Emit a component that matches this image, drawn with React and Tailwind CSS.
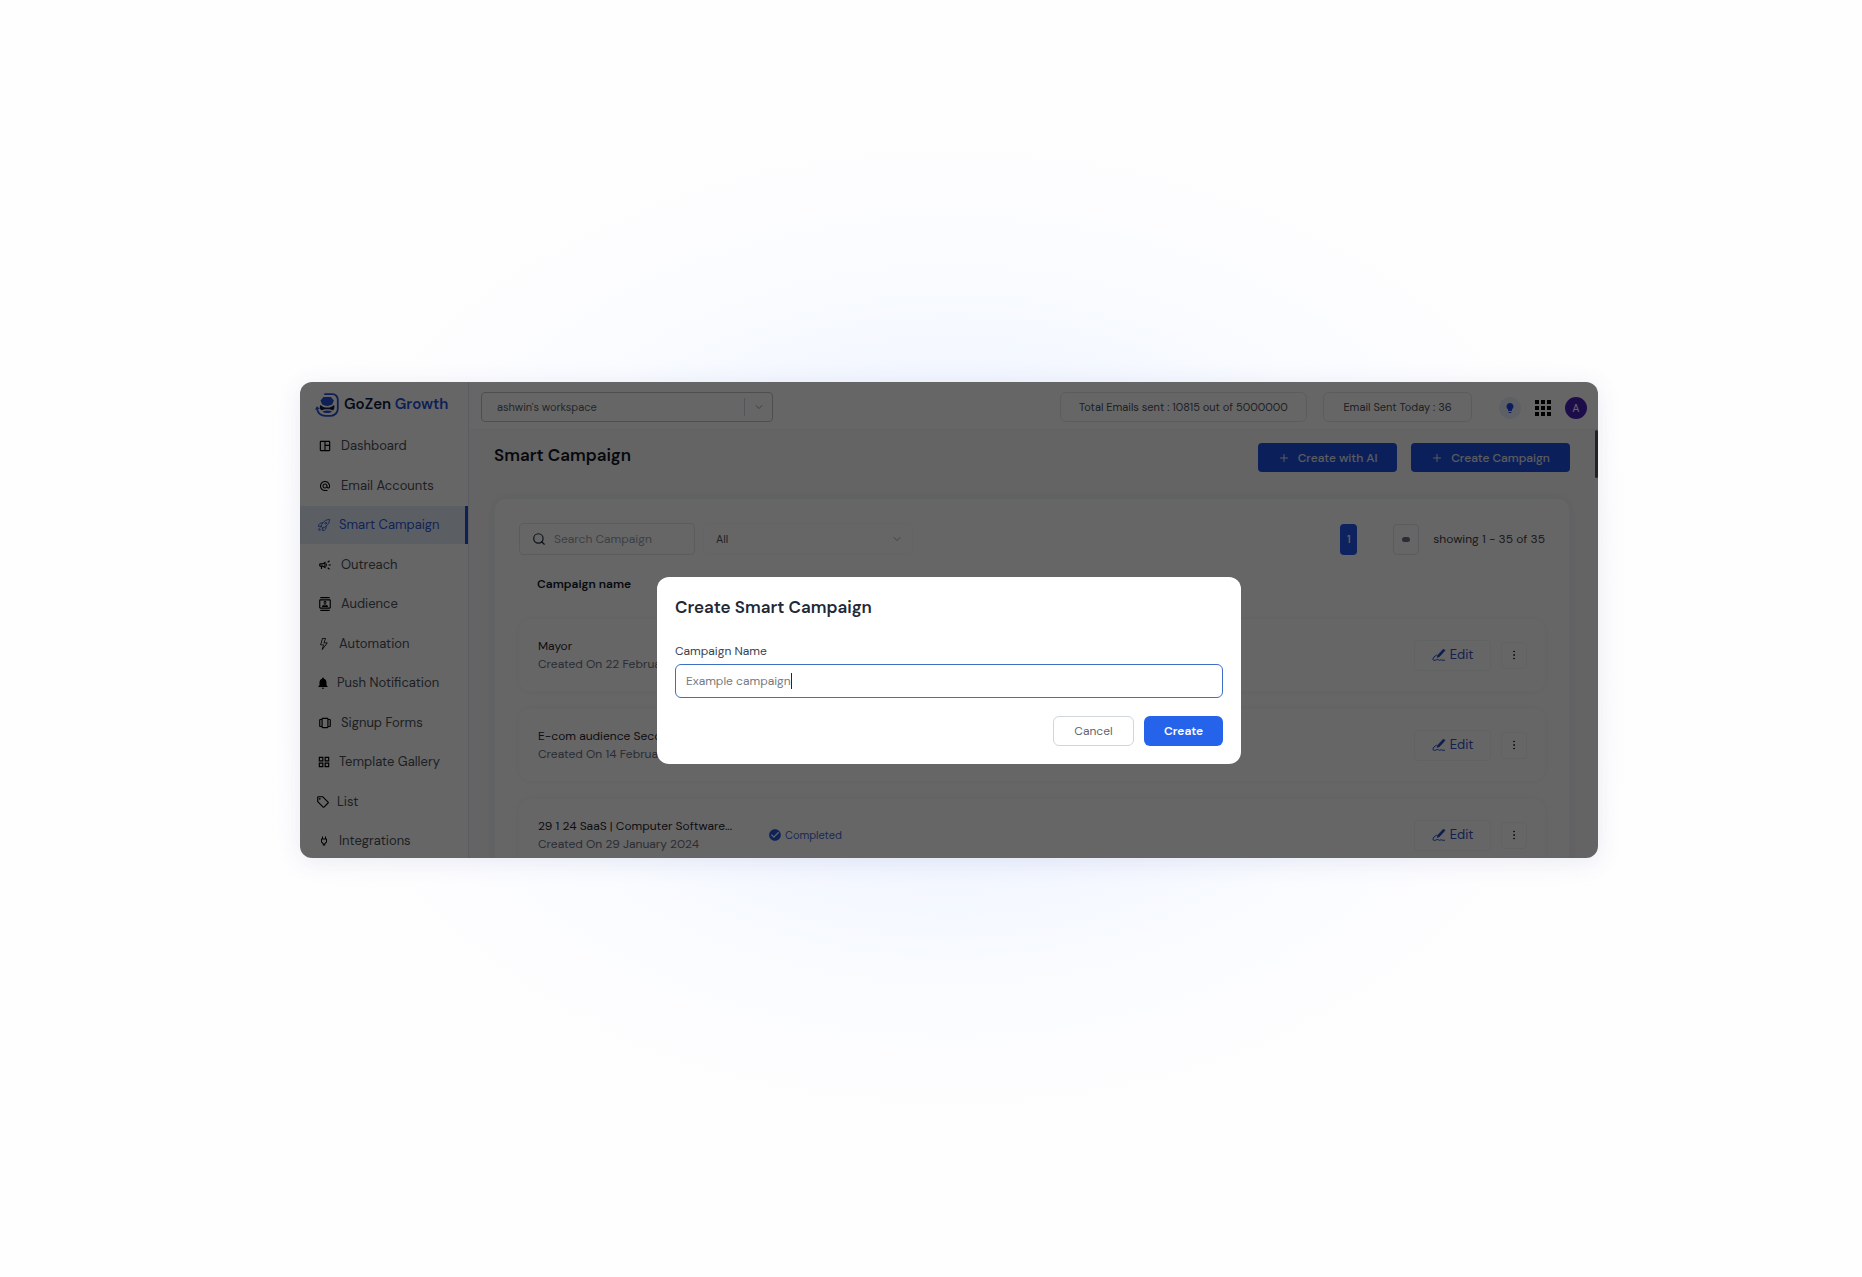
import React, { useState } from 'react';
import {
    MdOutlineSpaceDashboard,
    MdAlternateEmail,
    MdOutlineCampaign,
    MdOutlineContacts,
    MdNotifications,
    MdOutlineGridView,
    MdOutlinePower,
    MdOutlineLocalOffer,
    MdApps,
    MdCheckCircle,
    MdLightbulb
} from 'react-icons/md';
import { BiCarousel } from 'react-icons/bi';
import { BsLightning } from 'react-icons/bs';
import { HiOutlineRocketLaunch } from 'react-icons/hi2';
import { ChevronDown, Plus, Search, EllipsisVertical } from 'lucide-react';

const menu = [
    { label: 'Dashboard', icon: MdOutlineSpaceDashboard, box: 'w-4', size: 'h-3.5 w-3.5' },
    { label: 'Email Accounts', icon: MdAlternateEmail, box: 'w-4', size: 'h-3 w-3' },
    { label: 'Smart Campaign', icon: HiOutlineRocketLaunch, box: 'w-3.5', size: 'h-3.5 w-3.5', active: true },
    { label: 'Outreach', icon: MdOutlineCampaign, box: 'w-4', size: 'h-3.5 w-3.5' },
    { label: 'Audience', icon: MdOutlineContacts, box: 'w-4', size: 'h-3.5 w-3.5' },
    { label: 'Automation', icon: BsLightning, box: 'w-3.5', size: 'h-3 w-3' },
    { label: 'Push Notification', icon: MdNotifications, box: 'w-3', size: 'h-3.5 w-3.5' },
    { label: 'Signup Forms', icon: BiCarousel, box: 'w-4', size: 'h-3.5 w-3.5' },
    { label: 'Template Gallery', icon: MdOutlineGridView, box: 'w-3.5', size: 'h-3.5 w-3.5' },
    { label: 'List', icon: MdOutlineLocalOffer, box: 'w-3', size: 'h-3.5 w-3.5' },
    { label: 'Integrations', icon: MdOutlinePower, box: 'w-3.5', size: 'h-3 w-3' }
];

const campaigns = [
    { name: 'Mayor', created: 'Created On 22 February 2024' },
    { name: 'E-com audience Second', created: 'Created On 14 February 2024' },
    { name: '29 1 24 SaaS | Computer Software...', created: 'Created On 29 January 2024', status: 'Completed' }
];

const Logo = () => (
    <svg viewBox="0 0 24 24" className="h-6 w-6 shrink-0" fill="none" aria-hidden="true">
        <path
            d="M10 1.2h7.500a5.300 5.300 0 0 1 5.300 5.300v9.300a7 7 0 0 1-7 7H10.500c-4.200 0-7.300-2.600-8.300-6.300"
            stroke="#2450d8"
            strokeWidth="1.800"
            strokeLinecap="round"
        />
        <path d="M0 16.800 1.800 13.200l3.200 2.600z" fill="#2450d8" />
        <path d="M8.500 4h7.400l3 3.500-1.700 4.100c-3 1.900-7 1.900-10 0L5.500 7.500z" fill="#2450d8" />
        <path d="M5.200 12c3.600 3.400 10.300 3.400 13.900 0 .8 2.200.3 4-1 5.300-3.400-1.500-8.500-1.500-11.900 0-1.400-1.500-1.800-3.100-1-5.300z" fill="#111c44" />
        <path d="M7.300 18.500c3-1.200 6.800-1.200 9.800 0-2.600 2-7.200 2-9.800 0z" fill="#2450d8" />
    </svg>
);

const PenIcon = () => (
    <svg viewBox="0 0 14 14" className="h-3.5 w-3.5" fill="none" aria-hidden="true">
        <path d="M11.500 1 13 2.500 7.300 8.700l-2.200.7.600-2.200z" fill="#2446c8" stroke="#2446c8" strokeWidth="0.6" />
        <path
            d="M4.400 7.200C2.500 8.200.9 9.800 1 11.300c.1 1.500 2 1.200 3.200.6 1.200-.7 1.900-.5 2.700.2.900.7 1.700-.6 2.700-.2.800.4 1.600.6 3 .3"
            stroke="#2446c8"
            strokeWidth="1"
            strokeLinecap="round"
        />
    </svg>
);

const Sidebar = () => (
    <aside className="flex w-[169px] shrink-0 flex-col border-r border-slate-200 bg-white">
        <a href="#home" className="flex h-[45px] shrink-0 items-center gap-[5px] pl-[15px] text-[15px] font-semibold">
            <Logo />
            <span className="whitespace-nowrap text-[#111c44]">
                GoZen <span className="text-[#2450d8]">Growth</span>
            </span>
        </a>
        <nav className="flex h-[433px] shrink-0 flex-col justify-between">
            {menu.map(({ label, icon: Icon, box, size, active }) => (
                <a
                    key={label}
                    href="#menu"
                    className={
                        active
                            ? 'flex h-[38px] items-center gap-2 border-r-[3px] border-[#2450d8] bg-[#e4edfb] pl-[17px] text-[13px] text-[#2f57d8]'
                            : 'flex h-[38px] items-center gap-2 pl-[17px] text-[13px] text-[#4b4f58]'
                    }
                >
                    <span className={`flex shrink-0 justify-center ${box}`}>
                        <Icon className={`shrink-0 ${size} ${active ? '' : 'text-black'}`} />
                    </span>
                    {label}
                </a>
            ))}
        </nav>
    </aside>
);

const Header = () => (
    <header className="flex h-12 shrink-0 items-center border-b border-slate-100 bg-white pt-[3px] pr-[11px] pl-3">
        <div className="relative flex w-[292px] items-center">
            <select
                aria-label="Workspace"
                className="h-[30px] w-full appearance-none rounded border border-[#c4c4c4] pl-[15px] text-[11px] text-[#5b5f68]"
            >
                <option>ashwin's workspace</option>
            </select>
            <span className="pointer-events-none absolute right-2 flex items-center gap-2">
                <span className="h-[18px] w-px bg-gray-300"></span>
                <ChevronDown className="h-3 w-3 text-gray-400" />
            </span>
        </div>
        <div className="ml-auto flex items-center gap-4 text-[11px] text-[#4b4f58]">
            <div className="flex h-[30px] w-[247px] items-center justify-center rounded-md border border-gray-200">
                Total Emails sent : 10815 out of 5000000
            </div>
            <div className="flex h-[30px] w-[149px] items-center justify-center rounded-md border border-gray-200">
                Email Sent Today : 36
            </div>
        </div>
        <div className="ml-[27px] flex items-center gap-2.5 pt-0.5">
            <button aria-label="Tips" className="flex h-[22px] w-[22px] items-center justify-center rounded-full bg-[#e9f0fb]">
                <MdLightbulb className="h-3 w-3 text-[#2446e8]" />
            </button>
            <button aria-label="Apps">
                <MdApps className="h-6 w-6 text-black" />
            </button>
            <button aria-label="Account" className="h-[22px] w-[22px] rounded-full bg-[#4a1fb8] text-[11px] text-white">
                A
            </button>
        </div>
    </header>
);

const Toolbar = () => (
    <div className="flex h-8 items-center">
        <label className="flex h-8 w-[176px] items-center gap-2 rounded border border-gray-200 px-3">
            <Search className="h-3.5 w-3.5 shrink-0 text-gray-800" />
            <input
                type="search"
                aria-label="Search Campaign"
                placeholder="Search Campaign"
                className="w-full min-w-0 text-[12px] outline-none placeholder:text-gray-400"
            />
        </label>
        <div className="relative ml-2 flex w-[210px] items-center">
            <select aria-label="Status" className="h-8 w-full appearance-none rounded border border-gray-50 pl-3 text-[11px] text-gray-600">
                <option>All</option>
            </select>
            <ChevronDown className="pointer-events-none absolute right-2.5 h-3 w-3 text-gray-400" />
        </div>
        <button className="ml-auto h-[31px] w-[17px] rounded bg-[#2255ee] text-[11px] font-medium text-white">1</button>
        <button aria-label="Rows per page" className="ml-9 flex h-[31px] w-[26px] items-center justify-center rounded border border-gray-200">
            <span className="h-[5px] w-2 rounded-sm bg-gray-500"></span>
        </button>
        <span className="ml-3.5 text-[12px] text-[#3c4048]">showing 1 - 35 of 35</span>
    </div>
);

const CampaignTable = () => (
    <table className="w-full border-separate border-spacing-x-0 border-spacing-y-[18px]">
        <thead>
            <tr>
                <th className="h-7 w-[249px] pl-[18px] text-left align-top text-[12px] leading-[22px] font-semibold text-[#111827]">
                    Campaign name
                </th>
                <th aria-label="Status"></th>
                <th aria-label="Actions"></th>
            </tr>
        </thead>
        <tbody>
            {campaigns.map((item) => (
                <tr key={item.name} className="rounded-xl shadow-[0_0_8px_rgba(30,41,90,0.05)]">
                    <td className="h-[72px] rounded-l-xl bg-white pl-[19px] text-[12px] leading-[18px] whitespace-nowrap">
                        <p className="text-[#1f2430]">{item.name}</p>
                        <p className="text-[#6b7080]">{item.created}</p>
                    </td>
                    <td className="bg-white">
                        {item.status && (
                            <span className="flex items-center gap-[3px] text-[11px] text-[#4468d8]">
                                <MdCheckCircle className="h-3.5 w-3.5 text-[#2255dd]" />
                                {item.status}
                            </span>
                        )}
                    </td>
                    <td className="rounded-r-xl bg-white pr-[18px]">
                        <div className="flex items-center justify-end gap-2.5">
                            <button className="flex h-[31px] w-[77px] items-center justify-center gap-1 rounded border border-gray-100 text-[13px] text-[#3352c4]">
                                <PenIcon />
                                Edit
                            </button>
                            <button aria-label="More" className="flex h-[27px] w-[26px] items-center justify-center rounded border border-gray-100">
                                <EllipsisVertical className="h-3 w-3 text-gray-800" />
                            </button>
                        </div>
                    </td>
                </tr>
            ))}
        </tbody>
    </table>
);

const CreateModal = () => {
    const [name, setName] = useState('Example campaign');

    return (
        <div className="absolute inset-0 flex items-start justify-center bg-black/60 pt-[195px]">
            <form
                role="dialog"
                aria-labelledby="modal-title"
                className="w-[45%] rounded-xl bg-white p-[18px]"
                onSubmit={(e) => e.preventDefault()}
            >
                <h2 id="modal-title" className="text-[17px] leading-6 font-semibold text-[#1f2937]">
                    Create Smart Campaign
                </h2>
                <label htmlFor="campaign-name" className="mt-5 mb-px block text-[12px] leading-6 text-[#374151]">
                    Campaign Name
                </label>
                <div className="flex h-[34px] items-center rounded-md border border-[#3f6fc4] pl-2.5">
                    <input
                        id="campaign-name"
                        value={name}
                        onChange={(e) => setName(e.target.value)}
                        className="field-sizing-content text-[12px] text-[#767a80] outline-none"
                    />
                    <span className="h-4 w-px bg-gray-800"></span>
                </div>
                <div className="mt-[18px] flex justify-end gap-2.5">
                    <button type="button" className="h-[30px] w-[81px] rounded-md border border-gray-300 text-[12px] text-[#5f6570]">
                        Cancel
                    </button>
                    <button type="submit" className="h-[30px] w-[79px] rounded-md bg-[#2563eb] text-[12px] font-semibold text-white">
                        Create
                    </button>
                </div>
            </form>
        </div>
    );
};

export default function App() {
    return (
        <div className="flex min-h-screen items-center bg-[#fefefe] bg-[radial-gradient(ellipse_760px_560px_at_51%_49%,#e9efff_0%,#f2f6ff_43%,#f9fbff_62%,#fdfdff_80%,#fefefe_100%)] pr-[264px] pb-[37px] pl-[300px] font-['DM_Sans','Inter',sans-serif]">
            <div className="relative flex aspect-[1298/476] w-full overflow-hidden rounded-xl bg-[#fbfbfd] shadow-[0_4px_24px_rgba(60,70,130,0.10)]">
                <Sidebar />
                <div className="flex min-w-0 flex-1 flex-col">
                    <Header />
                    <main className="flex min-h-0 flex-1">
                        <div className="flex min-w-0 flex-1 flex-col pt-[13px] pr-[25px] pl-[25px]">
                            <div className="flex h-[29px] shrink-0 items-start">
                                <h1 className="mr-auto text-[17px] leading-6 font-semibold text-[#111827]">Smart Campaign</h1>
                                <button className="flex h-[29px] w-[139px] items-center justify-center gap-2 rounded bg-[#1d4fe0] text-[12px] font-medium text-[#e5e7eb]">
                                    <Plus className="h-3 w-3" />
                                    Create with AI
                                </button>
                                <button className="ml-3.5 flex h-[29px] w-[159px] items-center justify-center gap-2 rounded bg-[#1d4fe0] text-[12px] font-medium text-[#e5e7eb]">
                                    <Plus className="h-3 w-3" />
                                    Create Campaign
                                </button>
                            </div>
                            <section className="mt-[26px] rounded-xl border border-gray-100 bg-white px-6 pt-6 shadow-[0_0_12px_rgba(30,41,90,0.08)]">
                                <Toolbar />
                                <CampaignTable />
                            </section>
                        </div>
                        <div className="h-12 w-[3px] rounded-sm bg-[#555]"></div>
                    </main>
                </div>
                <CreateModal />
            </div>
        </div>
    );
}
